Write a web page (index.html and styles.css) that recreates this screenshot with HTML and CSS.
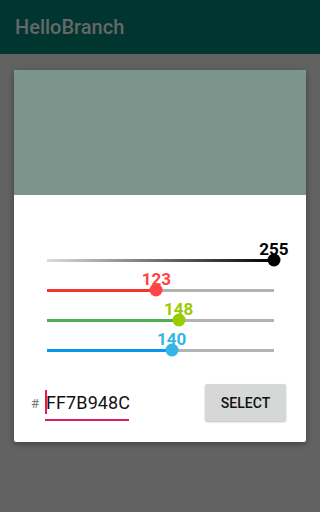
FILE: index.html
```html
<!DOCTYPE html>
<html>
<head>
<meta charset="utf-8">
<link rel="stylesheet" href="styles.css">
</head>
<body>
<header class="appbar">HelloBranch</header>
<main class="scrim">
  <div class="dialog">
    <div class="preview"></div>
    <div class="sliders">
      <div class="slider alpha">
        <div class="track"><div class="fill"></div><span class="thumb" style="left:100%"></span><span class="label" style="left:100%">255</span></div>
      </div>
      <div class="slider red">
        <div class="track"><div class="fill" style="width:48.2%"></div><span class="thumb" style="left:48.2%"></span><span class="label" style="left:48.2%">123</span></div>
      </div>
      <div class="slider green">
        <div class="track"><div class="fill" style="width:58%"></div><span class="thumb" style="left:58%"></span><span class="label" style="left:58%">148</span></div>
      </div>
      <div class="slider blue">
        <div class="track"><div class="fill" style="width:54.9%"></div><span class="thumb" style="left:54.9%"></span><span class="label" style="left:54.9%">140</span></div>
      </div>
    </div>
    <div class="hex-row">
      <div class="hex">
        <span class="hash">#</span>
        <div class="field"><span class="cursor"></span>FF7B948C</div>
      </div>
      <button class="select">SELECT</button>
    </div>
  </div>
</main>
</body>
</html>
```

FILE: styles.css
```css
* { box-sizing: border-box; }
html, body { margin: 0; padding: 0; }
body {
  width: 320px;
  height: 512px;
  background: #626262;
  font-family: Roboto, "Liberation Sans", sans-serif;
  overflow: hidden;
}
.appbar {
  height: 54px;
  background: #00362f;
  color: #676767;
  font-size: 20px;
  font-weight: 500;
  padding-left: 15px;
  display: flex;
  align-items: center;
  padding-bottom: 1px;
}
.scrim {
  padding-top: 16px;
  padding-left: 14px;
}
.dialog {
  width: 292px;
  background: #fff;
  border-radius: 2px;
  box-shadow: 0 2px 6px rgba(0,0,0,0.35);
  padding-bottom: 21px;
}
.preview {
  height: 125px;
  background: #7b948c;
  border-radius: 2px 2px 0 0;
}
.sliders {
  padding: 50px 0 0 33px;
}
.slider {
  height: 30px;
  display: flex;
  align-items: center;
}
.track {
  position: relative;
  width: 227px;
  height: 3px;
  background: #b3b3b3;
}
.fill {
  height: 3px;
}
.thumb {
  position: absolute;
  top: 50%;
  width: 13px;
  height: 13px;
  border-radius: 50%;
  transform: translate(-50%, -50%);
}
.label {
  position: absolute;
  top: -18px;
  transform: translateX(-50%);
  font-size: 17px;
  line-height: 17px;
  font-weight: 700;
  white-space: nowrap;
}
.alpha .track { background: linear-gradient(to right, #dcdcdc, #000); }
.alpha .thumb { background: #000; }
.alpha .label { color: #000; }
.red .fill { background: #f2362a; }
.red .thumb { background: #ff4444; }
.red .label { color: #ff4444; }
.green .fill { background: #4caf50; }
.green .thumb { background: #99cc00; }
.green .label { color: #99cc00; }
.blue .fill { background: #0b95f0; }
.blue .thumb { background: #33b5e5; }
.blue .label { color: #33b5e5; }

.hex-row {
  margin-top: 19px;
  height: 37px;
  padding: 0 20px 0 17px;
  display: flex;
  align-items: center;
  justify-content: space-between;
}
.hex {
  display: flex;
  align-items: center;
}
.hash {
  color: #777;
  font-size: 13px;
  width: 14px;
  margin-top: 1px;
}
.field {
  position: relative;
  font-size: 18px;
  color: #111;
  width: 84px;
  padding: 4px 0 6px 1px;
  border-bottom: 2px solid #e5175f;
  margin-top: 3px;
  letter-spacing: 0.1px;
}
.cursor {
  position: absolute;
  left: 0;
  top: 2px;
  width: 2px;
  height: 24px;
  background: #e5175f;
}
.select {
  width: 81px;
  height: 37px;
  border: none;
  border-radius: 2px;
  background: #d6d7d7;
  box-shadow: 0 1px 2px rgba(0,0,0,0.25);
  font-family: Roboto, "Liberation Sans", sans-serif;
  font-size: 14px;
  font-weight: 500;
  color: #111;
  padding: 0;
}
```
